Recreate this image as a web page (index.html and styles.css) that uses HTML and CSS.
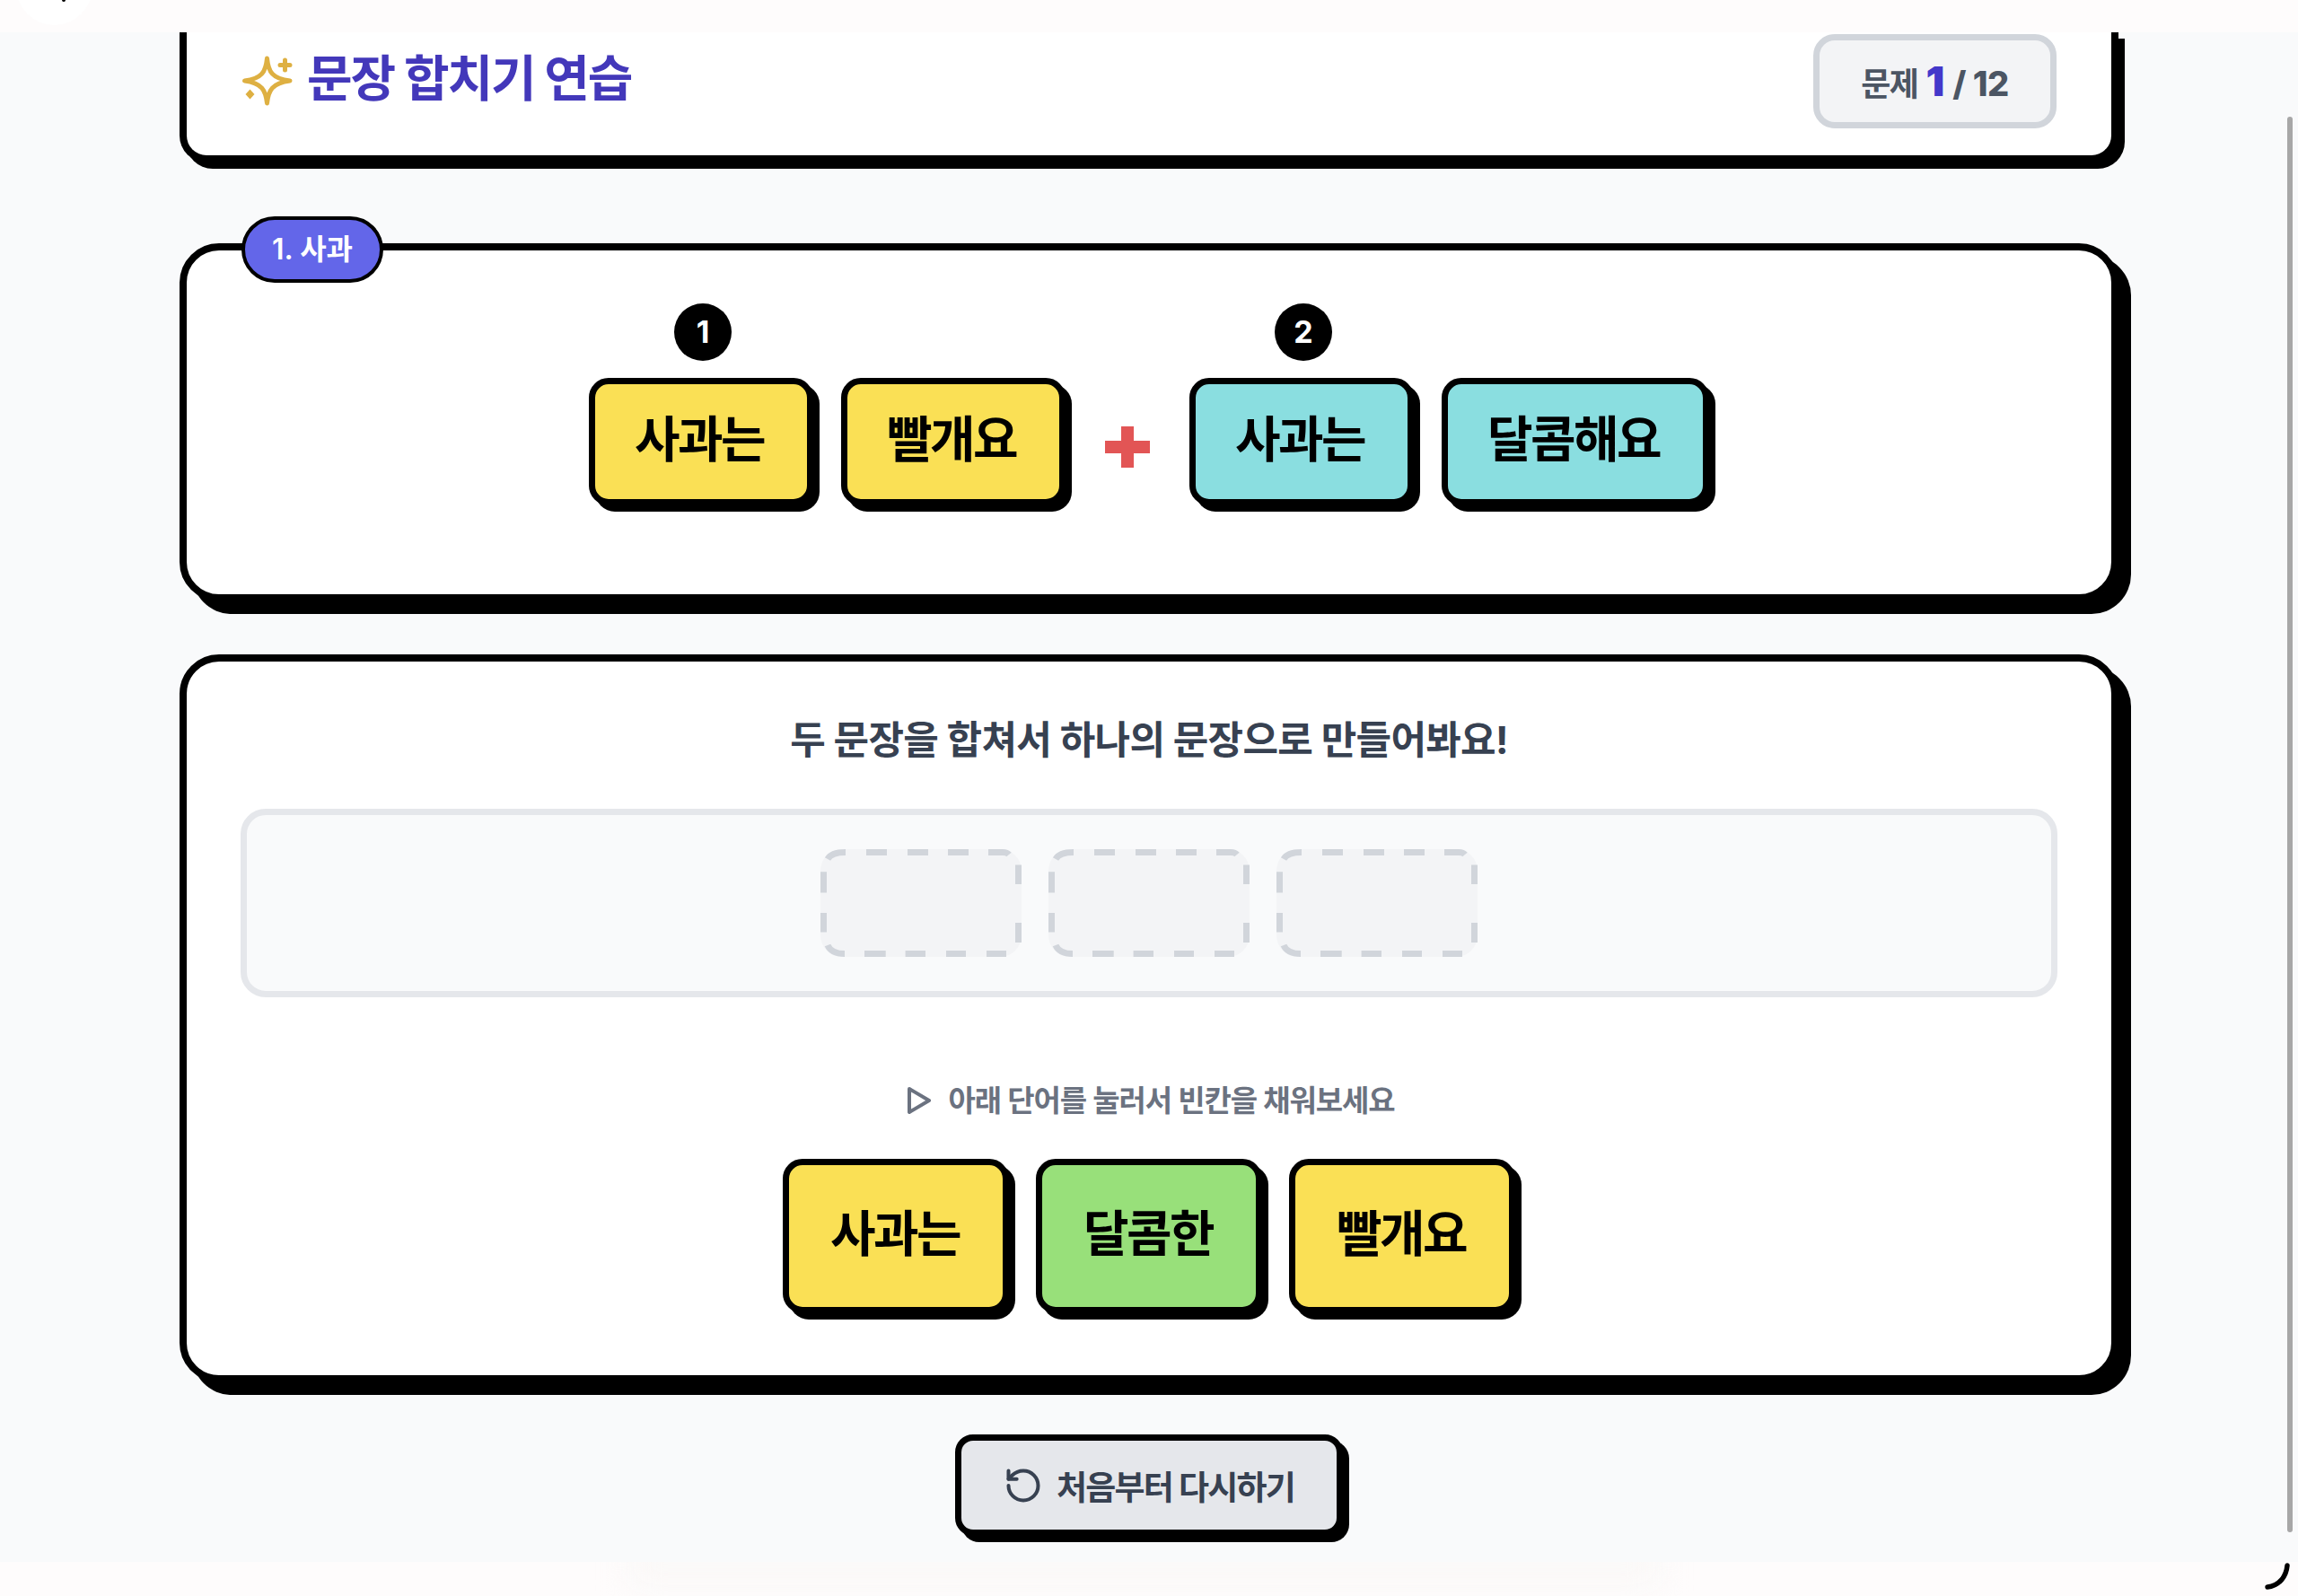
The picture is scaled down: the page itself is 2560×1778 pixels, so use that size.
FILE: index.html
```html
<!DOCTYPE html>
<html lang="ko">
<head>
<meta charset="utf-8">
<title>문장 합치기 연습</title>
<link rel="stylesheet" href="styles.css">
</head>
<body>
<div class="app">
  <div class="band band-top">
    <span class="notch"><span class="notch-dot"></span></span>
  </div>
  <main class="main">
    <header class="card card-head">
      <h1 class="title">
        <svg class="sparkle" viewBox="0 0 56 56" aria-hidden="true">
          <path class="sparkle-star" d="M27.500 3C29 18 33 25.500 53 28C33 30.500 29 39 27.500 53C26 39 22 30.500 2.500 28C22 25.500 26 18 27.500 3Z"/>
          <path class="sparkle-plus" d="M47.500 5v11M42 10.500h11"/>
          <path class="sparkle-dia" d="M8.500 37.500l5 5.500-5 5.500-5-5.500z"/>
        </svg>
        <span class="title-text">문장 합치기 연습</span>
      </h1>
      <div class="counter">
        <span class="counter-label">문제</span>
        <span class="counter-now">1</span>
        <span class="counter-total">/ 12</span>
      </div>
    </header>

    <section class="card card-deep card-prompt">
      <span class="tag">1. 사과</span>
      <div class="sentences">
        <div class="words">
          <div class="chip chip-yellow"><span class="num">1</span>사과는</div>
          <div class="chip chip-yellow">빨개요</div>
        </div>
        <svg class="plus" viewBox="0 0 50 46" aria-hidden="true"><path d="M18 0h14v16h18v14H32v16H18V30H0V16h18z"/></svg>
        <div class="words">
          <div class="chip chip-cyan"><span class="num">2</span>사과는</div>
          <div class="chip chip-cyan">달콤해요</div>
        </div>
      </div>
    </section>

    <section class="card card-deep card-work">
      <h2 class="ask">두 문장을 합쳐서 하나의 문장으로 만들어봐요!</h2>
      <div class="answer">
        <svg width="0" height="0" class="defs" aria-hidden="true">
          <symbol id="dashes" viewBox="0 0 224 120">
            <path d="M8 11Q12 3.500 28 3.500M51 3.500H74M97 3.500H120M142 3.500H165M187 3.500H203Q208 3.500 210 6M220.500 17.600V39M220.500 82V104M207 116.500H185M162 116.500H140M117 116.500H94.600M72.700 116.500H49M27 116.500Q12 116.500 8 107M3.500 92.600V71M3.500 48.600V25.300"/>
          </symbol>
        </svg>
        <div class="slot"><svg class="dash" viewBox="0 0 224 120"><use href="#dashes"/></svg></div>
        <div class="slot"><svg class="dash" viewBox="0 0 224 120"><use href="#dashes"/></svg></div>
        <div class="slot"><svg class="dash" viewBox="0 0 224 120"><use href="#dashes"/></svg></div>
      </div>
      <p class="hint">
        <svg class="hint-icon" viewBox="0 0 26 30" aria-hidden="true"><path d="M2 2l22 13L2 28z"/></svg>
        <span>아래 단어를 눌러서 빈칸을 채워보세요</span>
      </p>
      <div class="choices">
        <button class="chip chip-tall chip-yellow">사과는</button>
        <button class="chip chip-tall chip-green">달콤한</button>
        <button class="chip chip-tall chip-yellow">빨개요</button>
      </div>
    </section>

    <button class="reset">
      <svg class="reset-icon" viewBox="0 0 24 24" aria-hidden="true"><path d="M3 12a9 9 0 1 0 9-9 9.750 9.750 0 0 0-6.740 2.740L3 8"/><path d="M3 3v5h5"/></svg>
      <span>처음부터 다시하기</span>
    </button>
  </main>
  <div class="band band-bottom">
    <svg class="cursor-arc" viewBox="0 0 30 30" aria-hidden="true"><path d="M26 3C25 15 17 26 4 27"/></svg>
  </div>
  <div class="scrollbar"></div>
</div>
</body>
</html>
```

FILE: styles.css
```css
* { box-sizing: border-box; }
html, body { margin: 0; padding: 0; }
body {
  font-family: Inter, "Noto Sans CJK KR", "Noto Sans", sans-serif;
  background: #f9fafb;
  color: #000;
}
.app {
  position: relative;
  width: 2560px;
  height: 1778px;
  display: flex;
  flex-direction: column;
  overflow: hidden;
}
.band { background: #fefcfc; position: relative; overflow: hidden; }
.band-top { height: 36px; flex: none; }
.band-bottom { height: 38px; flex: none; }
.band-bottom::before {
  content: "";
  position: absolute;
  left: 700px;
  top: -20px;
  width: 1150px;
  height: 46px;
  background: #faf8f7;
  filter: blur(18px);
}
.notch {
  position: absolute;
  left: 18px;
  top: -57px;
  width: 85px;
  height: 85px;
  border-radius: 50%;
  background: #fff;
}
.notch-dot {
  position: absolute;
  left: 51px;
  bottom: 26px;
  width: 4px;
  height: 4px;
  border-radius: 50%;
  background: #000;
}
.cursor-arc {
  position: absolute;
  left: 2522px;
  top: 1px;
  width: 30px;
  height: 30px;
  fill: none;
  stroke: #000;
  stroke-width: 5.500;
  stroke-linecap: round;
}
.scrollbar {
  position: absolute;
  left: 2548px;
  top: 130px;
  width: 6px;
  height: 1577px;
  border-radius: 3px;
  background: #a7a7a7;
}
.main {
  flex: 1;
  display: flex;
  flex-direction: column;
  align-items: center;
  width: 2160px;
  margin: 0 auto;
}
.card {
  position: relative;
  width: 100%;
  flex: none;
  background: #fff;
  border: 8px solid #000;
}
.card-head {
  border-top: 0;
  border-radius: 0 0 30px 30px;
  box-shadow: 7px 7px 0 #000;
  padding: 2px 61px 30px 62px;
  display: flex;
  justify-content: space-between;
  align-items: center;
}
.card-deep {
  border-radius: 44px;
  box-shadow: 14px 14px 0 #000;
}
.title {
  margin: 0;
  display: flex;
  align-items: center;
  gap: 16px;
  font-size: 55px;
  letter-spacing: -2.100px;
  line-height: 72px;
  font-weight: 700;
  color: #4338ba;
  position: relative;
  top: -4px;
}
.sparkle { width: 56px; height: 56px; flex: none; position: relative; top: 3px; }
.sparkle-star { fill: none; stroke: #deb042; stroke-width: 5; stroke-linejoin: round; }
.sparkle-plus { fill: none; stroke: #deb042; stroke-width: 5; stroke-linecap: round; }
.sparkle-dia { fill: #deb042; }
.counter {
  width: 271px;
  height: 105px;
  border: 7px solid #d1d5db;
  border-radius: 24px;
  background: #f3f4f6;
  display: flex;
  align-items: baseline;
  justify-content: center;
  gap: 9px;
  line-height: 90px;
  color: #4b5563;
}
.counter-label { font-size: 36px; font-weight: 700; letter-spacing: -1.500px; }
.counter-now { font-size: 46px; font-weight: 900; color: #4338ca; }
.counter-total { font-size: 38px; font-weight: 800; letter-spacing: -0.500px; }
.card-prompt { margin-top: 90px; padding: 142px 0 99px; }
.tag {
  position: absolute;
  left: 61px;
  top: -38px;
  height: 74px;
  padding: 0 30px;
  border: 4px solid #000;
  border-radius: 37px;
  background: #6366e9;
  color: #fff;
  font-size: 32px;
  font-weight: 600;
  line-height: 66px;
  white-space: nowrap;
}
.sentences {
  display: flex;
  justify-content: center;
  align-items: center;
  gap: 44px;
}
.words { display: flex; gap: 31px; }
.plus { width: 50px; height: 46px; fill: #e25555; flex: none; position: relative; top: 6px; }
.chip {
  position: relative;
  display: block;
  padding: 25px 48px 31px 44px;
  border: 7px solid #000;
  border-radius: 22px;
  box-shadow: 7px 7px 0 #000;
  font-family: inherit;
  font-size: 55px;
  letter-spacing: -2.600px;
  font-weight: 700;
  line-height: 72px;
  color: #000;
  white-space: nowrap;
}
.chip-tall { padding: 40px 48px 46px 46px; }
.chip-yellow { background: #fae055; }
.chip-cyan { background: #8adee0; }
.chip-green { background: #98e07a; }
.num {
  position: absolute;
  left: 50%;
  top: -90px;
  width: 64px;
  height: 64px;
  margin-left: -30px;
  border-radius: 50%;
  background: #000;
  color: #fff;
  font-size: 34px;
  letter-spacing: 0;
  font-weight: 700;
  line-height: 64px;
  text-align: center;
}
.card-work { margin-top: 59px; padding: 60px 60px 69px; }
.ask {
  margin: 0 0 50px;
  text-align: center;
  font-size: 43px;
  letter-spacing: -0.700px;
  line-height: 54px;
  font-weight: 700;
  color: #374151;
}
.answer {
  height: 210px;
  padding: 38px 0;
  border: 7px solid #e5e7eb;
  border-radius: 28px;
  background: #f9fafb;
  display: flex;
  justify-content: center;
  gap: 30px;
}
.defs { position: absolute; }
.slot { width: 224px; height: 120px; background: #f3f4f6; border-radius: 24px; flex: none; }
.dash { display: block; width: 224px; height: 120px; }
.dash use { fill: none; stroke: #d1d5db; stroke-width: 7; }
.hint {
  margin: 93px 0 43px;
  padding-left: 5px;
  height: 44px;
  display: flex;
  align-items: center;
  justify-content: center;
  gap: 19px;
  font-size: 33px;
  letter-spacing: -1.100px;
  font-weight: 600;
  line-height: 44px;
  color: #6b7280;
}
.hint-icon { width: 26px; height: 30px; fill: none; stroke: #6b7280; stroke-width: 4; stroke-linejoin: round; flex: none; }
.choices { display: flex; justify-content: center; gap: 30px; }
.reset {
  margin-top: 58px;
  flex: none;
  width: 432px;
  height: 113px;
  padding: 0;
  border: 7px solid #000;
  border-radius: 20px;
  background: #e5e7eb;
  box-shadow: 7px 7px 0 #000;
  display: flex;
  align-items: center;
  justify-content: center;
  gap: 15px;
  font-family: inherit;
  font-size: 37px;
  letter-spacing: -1.800px;
  font-weight: 700;
  color: #374151;
}
.reset-icon { width: 44px; height: 44px; fill: none; stroke: #374151; stroke-width: 2.200; stroke-linecap: round; stroke-linejoin: round; flex: none; }
```
